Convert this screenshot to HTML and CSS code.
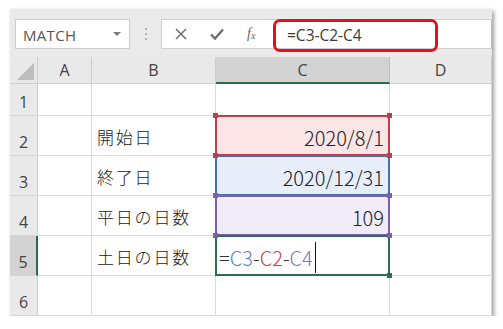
FILE: index.html
```html
<!DOCTYPE html>
<html lang="ja">
<head>
<meta charset="utf-8">
<link rel="stylesheet" href="styles.css">
</head>
<body>
<div class="shot">
  <div class="toolbar">
    <div class="namebox">
      <span class="name-text">MATCH</span>
      <span class="dd"></span>
    </div>
    <div class="grip"><i></i><i></i><i></i></div>
    <div class="fbar">
      <div class="icons">
        <svg class="ic-x" width="12" height="12" viewBox="0 0 12 12"><path d="M1 1L11 11M11 1L1 11" stroke="#6e6e6e" stroke-width="1.5" fill="none"/></svg>
        <svg class="ic-ok" width="14" height="12" viewBox="0 0 14 12"><path d="M1 6.5L5 10.5L13 1.5" stroke="#6e6e6e" stroke-width="2.4" fill="none"/></svg>
        <span class="ic-fx">f<sub>x</sub></span>
      </div>
      <div class="formula">=C3-C2-C4</div>
      <div class="callout"></div>
    </div>
  </div>
  <div class="grid">
    <div class="hd corner"><span class="tri"></span></div>
    <div class="hd col">A</div>
    <div class="hd col">B</div>
    <div class="hd col sel">C</div>
    <div class="hd col">D</div>

    <div class="hd row">1</div>
    <div class="cell"></div>
    <div class="cell"></div>
    <div class="cell"></div>
    <div class="cell"></div>

    <div class="hd row">2</div>
    <div class="cell"></div>
    <div class="cell jp">開始日</div>
    <div class="cell num r-red">2020/8/1<span class="h tl red"></span><span class="h tr red"></span><span class="h bl red"></span><span class="h br red"></span></div>
    <div class="cell"></div>

    <div class="hd row">3</div>
    <div class="cell"></div>
    <div class="cell jp">終了日</div>
    <div class="cell num r-blue">2020/12/31</div>
    <div class="cell"></div>

    <div class="hd row">4</div>
    <div class="cell"></div>
    <div class="cell jp">平日の日数</div>
    <div class="cell num r-purple">109<span class="h tl purple"></span><span class="h tr purple"></span><span class="h bl purple"></span><span class="h br purple"></span></div>
    <div class="cell"></div>

    <div class="hd row rsel">5</div>
    <div class="cell"></div>
    <div class="cell jp">土日の日数</div>
    <div class="cell edit r-green"><span class="k">=</span><span class="cb">C3</span><span class="k">-</span><span class="cr">C2</span><span class="k">-</span><span class="cp">C4</span><span class="caret"></span><span class="h br green"></span></div>
    <div class="cell"></div>

    <div class="hd row">6</div>
    <div class="cell"></div>
    <div class="cell"></div>
    <div class="cell"></div>
    <div class="cell"></div>
  </div>
</div>
</body>
</html>
```
FILE: styles.css
```css
* { box-sizing: border-box; }
html, body { margin: 0; padding: 0; background: #ffffff; }
body { font-family: "Noto Sans", "Liberation Sans", sans-serif; }

.shot {
  margin: 8px 0 0 10px;
  width: 482px;
  height: 308px;
  background: #ffffff;
  box-shadow: 2px 3px 4px rgba(0,0,0,0.38);
}

.toolbar {
  height: 49px;
  background: #eaeaea;
  border-top: 1px solid #f4f4f4;
  display: flex;
  align-items: flex-start;
  padding: 10px 0 0 5px;
}

.namebox {
  width: 115px;
  height: 30px;
  background: #fff;
  border: 1px solid #cdcdcd;
  display: flex;
  align-items: center;
  justify-content: space-between;
  padding: 0 6px 0 7px;
}
.name-text {
  font-family: "Open Sans", "Liberation Sans", sans-serif;
  font-size: 15px;
  color: #555;
  letter-spacing: 0.3px;
  margin-top: 1px;
}
.dd {
  width: 0; height: 0;
  border-left: 4px solid transparent;
  border-right: 4px solid transparent;
  border-top: 4px solid #7a7a7a;
  margin-right: 2px;
}

.grip {
  width: 31px;
  height: 30px;
  display: flex;
  flex-direction: column;
  align-items: center;
  justify-content: center;
  gap: 3px;
}
.grip i {
  display: block;
  width: 2px;
  height: 2px;
  background: #b4b4b4;
}

.fbar {
  position: relative;
  width: 331px;
  height: 30px;
  background: #fff;
  border: 1px solid #cfcfcf;
  border-right: 1px solid #bdbdbd;
  display: flex;
  align-items: center;
}
.icons {
  width: 111px;
  height: 100%;
  display: flex;
  align-items: center;
  padding-left: 13px;
}
.ic-x { margin-right: 23px; }
.ic-ok { margin-right: 23px; }
.ic-fx {
  font-family: "Liberation Serif", serif;
  font-style: italic;
  font-size: 14px;
  color: #666;
  line-height: 1;
}
.ic-fx sub { font-size: 10px; vertical-align: -1px; }
.formula {
  padding-left: 14px;
  font-family: "Open Sans", "Liberation Sans", sans-serif;
  font-size: 15.5px;
  color: #3a3a3a;
  margin-top: 1px;
}
.callout {
  position: absolute;
  left: 111px;
  top: -1px;
  width: 165px;
  height: 33px;
  border: 3px solid #e3111b;
  border-radius: 7px;
}

.grid {
  display: grid;
  grid-template-columns: 28px 54px 124px 174px 102px;
  grid-template-rows: 27px 32px repeat(5, 40px);
}

.hd {
  background: #e9e9e9;
  border-right: 1px solid #cdcdcd;
  border-bottom: 1px solid #cdcdcd;
  color: #444;
  font-family: "Open Sans", "Liberation Sans", sans-serif;
  font-size: 16px;
  display: flex;
  justify-content: center;
}
.col { align-items: center; }
.row { align-items: flex-end; padding-bottom: 2px; line-height: 1.3; border-bottom-color: #d6d6d6; }
.corner { position: relative; }
.tri {
  position: absolute;
  right: 3px;
  bottom: 3px;
  width: 0; height: 0;
  border-left: 17px solid transparent;
  border-bottom: 17px solid #bdbdbd;
}
.sel { background: #d3d3d3; border-bottom: 2px solid #217346; border-right-color: #c0c0c0; }
.rsel { background: #d3d3d3; border-right: 2px solid #217346; }

.cell {
  position: relative;
  background: #fff;
  border-right: 1px solid #dadada;
  border-bottom: 1px solid #dadada;
  display: flex;
  align-items: center;
}

.jp {
  font-family: "Noto Sans CJK JP", sans-serif;
  font-weight: 300;
  font-size: 17px;
  letter-spacing: 1.8px;
  color: #222;
  padding-left: 5px;
  padding-top: 1px;
}
.num {
  justify-content: flex-end;
  font-family: "Noto Sans CJK JP", sans-serif;
  font-weight: 300;
  font-size: 20px;
  color: #222;
  padding-right: 5px;
  padding-top: 4px;
}

.r-red { background: #fbe5e6; }
.r-blue { background: #e7eef9; }
.r-purple { background: #efebf7; }

.r-red::before, .r-blue::before, .r-purple::before, .r-green::before {
  content: "";
  position: absolute;
  top: -1px; left: -1px; right: -1px; bottom: -1px;
  border: 2px solid;
  pointer-events: none;
}
.r-red::before { border-color: #c23c4a; z-index: 2; }
.r-blue::before { border-color: #4a6ea9; z-index: 1; }
.r-purple::before { border-color: #7f5fac; z-index: 2; }
.r-green::before { border-color: #2e6e4b; z-index: 3; }

.h {
  position: absolute;
  width: 5px;
  height: 5px;
  z-index: 5;
}
.h.tl { left: -3px; top: -3px; }
.h.tr { right: -3px; top: -3px; }
.h.bl { left: -3px; bottom: -3px; }
.h.br { right: -3px; bottom: -3px; }
.h.red { background: #c23c4a; }
.h.purple { background: #7f5fac; }
.h.green { background: #2e6e4b; }

.edit {
  font-family: "Noto Sans CJK JP", sans-serif;
  font-weight: 300;
  font-size: 20px;
  padding-left: 3px;
  padding-top: 3px;
  color: #222;
}
.cb { color: #5b7fc2; }
.cr { color: #c0434f; }
.cp { color: #8a71b9; }
.k { color: #333; }
.caret {
  display: inline-block;
  width: 1px;
  height: 31px;
  background: #111;
  margin-left: 2px;
}
```
